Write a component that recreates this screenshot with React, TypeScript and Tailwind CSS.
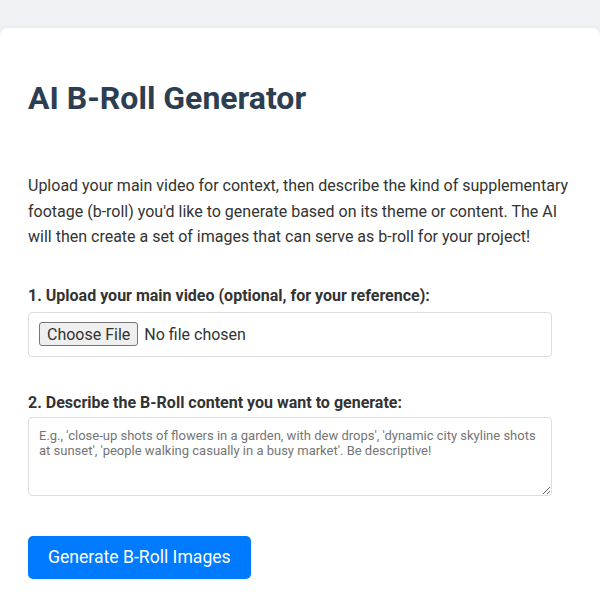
import React, { useState } from 'react';

export default function App() {
  const [prompt, setPrompt] = useState('');

  return (
    <div className="min-h-screen bg-[#f0f2f5] pt-[28px] font-['Roboto',sans-serif] text-[#333]">
      <div className="w-[600px] rounded-[8px] bg-white px-[28px] pt-[51px] pb-[40px] shadow-[0_2px_8px_rgba(0,0,0,0.08)]">
        <h1 className="text-[32px] font-bold leading-[38px] text-[#2c3e50]">AI B-Roll Generator</h1>

        <p className="mt-[56px] text-[16px] leading-[25.6px]">
          Upload your main video for context, then describe the kind of supplementary footage (b-roll) you'd like to
          generate based on its theme or content. The AI will then create a set of images that can serve as b-roll for
          your project!
        </p>

        <label htmlFor="video" className="mt-[36px] mb-[6px] block text-[16px] font-bold leading-[20px]">
          1. Upload your main video (optional, for your reference):
        </label>
        <input
          id="video"
          type="file"
          accept="video/*"
          className="block h-[45px] w-[524px] rounded-[4px] border border-[#ddd] px-[10px] pt-[9px] pb-[9px] text-[16px] file:mr-[6px] file:h-[24px] file:rounded-[3px] file:border file:border-[#767676] file:bg-[#efefef] file:px-[7px] file:text-[16px]"
        />

        <label htmlFor="prompt" className="mt-[36px] mb-[4px] block text-[16px] font-bold leading-[20px]">
          2. Describe the B-Roll content you want to generate:
        </label>
        <textarea
          id="prompt"
          value={prompt}
          onChange={(e) => setPrompt(e.target.value)}
          placeholder="E.g., 'close-up shots of flowers in a garden, with dew drops', 'dynamic city skyline shots at sunset', 'people walking casually in a busy market'. Be descriptive!"
          className="block h-[79px] w-[524px] rounded-[4px] border border-[#ddd] px-[10px] py-[10px] text-[13px] leading-[15px] placeholder:text-[#757575]"
        />

        <button className="mt-[40px] h-[43px] rounded-[5px] bg-[#007bff] px-[20px] text-[17.6px] text-white">
          Generate B-Roll Images
        </button>
      </div>
    </div>
  );
}
